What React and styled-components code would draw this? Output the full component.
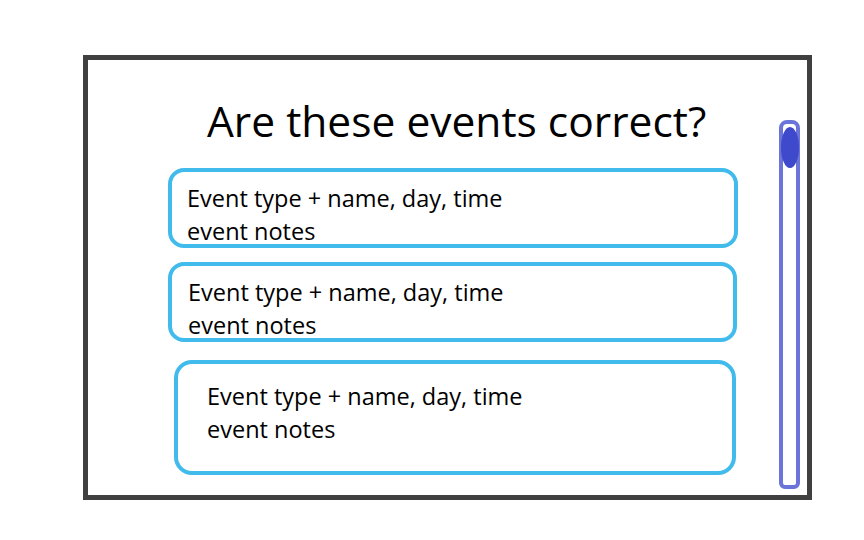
import React from 'react';
import styled, {createGlobalStyle} from 'styled-components';

const GlobalStyle = createGlobalStyle`
  html, body {
    margin: 0;
    padding: 0;
    background: #FFF;
  }
  body {
    font-family: "Open Sans", "Noto Sans", sans-serif;
    color: #000;
  }
`;

const Page = styled.div`
  width: 864px;
  height: 540px;
  padding: 55px 0 0 83px;
  box-sizing: border-box;
`;

const Frame = styled.div`
  display: flex;
  flex-direction: row;
  width: 729px;
  height: 445px;
  box-sizing: border-box;
  border: 5px solid #404040;
  background-color: #FFF;
`;

const Main = styled.div`
  flex: 1;
  display: flex;
  flex-direction: column;
`;

const Title = styled.h1`
  margin: 33px 0 0 0;
  padding-left: 119px;
  font-size: 42.5px;
  font-weight: 400;
  line-height: 56px;
  white-space: nowrap;
`;

const CardList = styled.div`
  display: flex;
  flex-direction: column;
  margin-top: 19px;
`;

const Card = styled.div`
  box-sizing: border-box;
  height: ${props => props.height}px;
  margin: ${props => props.gap}px ${props => props.right}px 0 ${props => props.left}px;
  padding: ${props => props.padTop}px 0 0 ${props => props.padLeft}px;
  border: 4px solid #41BBEC;
  border-radius: ${props => props.radius}px;
  font-size: 23.5px;
  line-height: 33px;
`;

const Line = styled.div`
  white-space: nowrap;
`;

const ScrollTrack = styled.div`
  display: flex;
  flex-direction: column;
  align-items: center;
  width: 21px;
  box-sizing: border-box;
  margin: 60px 7px 6px 0;
  border: 4px solid #6B74D9;
  border-radius: 8px 8px 6px 6px;
`;

const Thumb = styled.div`
  width: 18px;
  height: 41px;
  margin-top: 3px;
  flex-shrink: 0;
  border-radius: 50%;
  background-color: #3F49CC;
`;

const events = [
  {left: 80, right: 41, gap: 0, height: 80, padTop: 10, padLeft: 15, radius: 16},
  {left: 80, right: 42, gap: 14, height: 80, padTop: 10, padLeft: 16, radius: 16},
  {left: 86, right: 43, gap: 18, height: 115, padTop: 16, padLeft: 29, radius: 18},
];

const App = () => (
  <>
    <GlobalStyle />
    <Page>
      <Frame>
        <Main>
          <Title>Are these events correct?</Title>
          <CardList>
            {events.map((e, i) => (
              <Card key={i} {...e}>
                <Line>Event type + name, day, time</Line>
                <Line>event notes</Line>
              </Card>
            ))}
          </CardList>
        </Main>
        <ScrollTrack>
          <Thumb />
        </ScrollTrack>
      </Frame>
    </Page>
  </>
);

export default App;
